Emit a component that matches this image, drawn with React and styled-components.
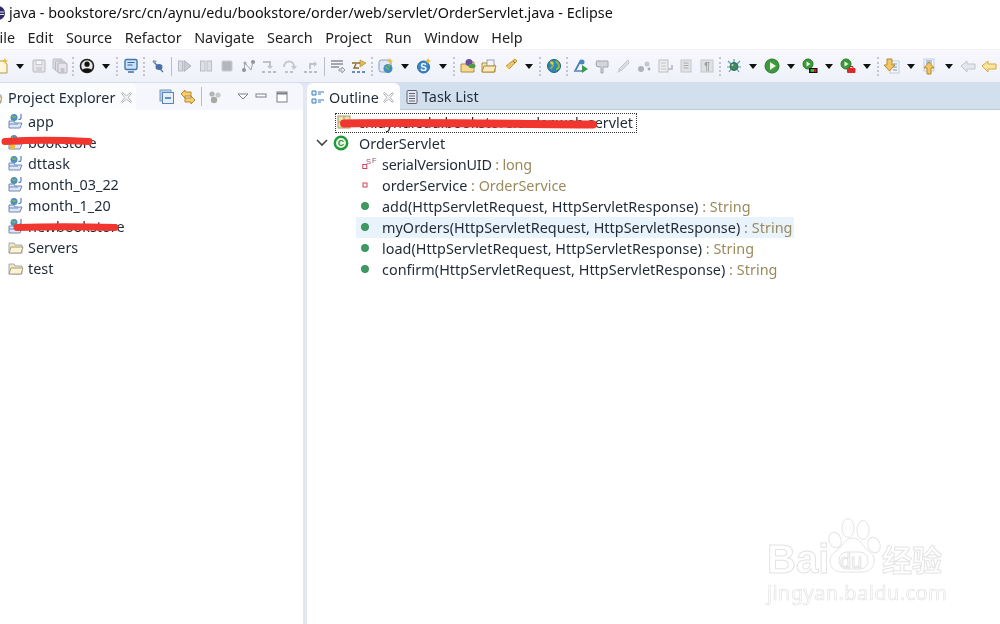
import React from 'react';
import styled, { createGlobalStyle } from 'styled-components';

const GlobalStyle = createGlobalStyle`
  html, body { margin: 0; padding: 0; background: #fff; }
  body { font-family: "Noto Sans", "Open Sans", sans-serif; color: #1f2a36; }
  #root { width: 1000px; height: 624px; overflow: hidden; }
`;

const Page = styled.div`
  position: relative;
  width: 1000px;
  height: 624px;
  overflow: hidden;
  display: flex;
  flex-direction: column;
  background: #fff;
  filter: blur(0.35px);
`;

const TitleBar = styled.div`
  height: 25px;
  flex: none;
  display: flex;
  align-items: center;
  gap: 3px;
  margin-left: -10px;
  font-size: 14.36px;
  color: #111;
  white-space: nowrap;
`;

const MenuBar = styled.div`
  height: 24px;
  box-sizing: border-box;
  padding-top: 1px;
  flex: none;
  display: flex;
  align-items: center;
  gap: 12.6px;
  margin-left: -8px;
  font-size: 14.4px;
  color: #222;
`;

const Toolbar = styled.div`
  height: 34px;
  flex: none;
  box-sizing: border-box;
  display: flex;
  align-items: center;
  margin-left: -10px;
  background: linear-gradient(#f8f8fd, #eef1fa);
  border-top: 1px solid #f1f1f6;
  border-bottom: 1px solid #d8dde8;
`;

const Slot = styled.span`
  flex: none;
  width: 21px;
  margin-left: ${p => p.$ml || 0}px;
  display: flex;
  justify-content: center;
`;

const Caret = styled.span`
  flex: none;
  width: 17px;
  display: flex;
  justify-content: center;
  &::after {
    content: "";
    border-left: 4.5px solid transparent;
    border-right: 4.5px solid transparent;
    border-top: 5px solid #111;
  }
`;

const Sep = styled.span`
  flex: none;
  width: 6px;
  height: 19px;
  display: flex;
  justify-content: center;
  &::after {
    content: "";
    width: 0;
    height: 100%;
    border-left: 2px dotted #c3c6ce;
  }
`;

const Bar = styled(Sep)`
  &::after { border-left: 1px solid #b9bdc8; }
`;

const Panes = styled.div`
  flex: 1;
  display: flex;
  background: #e3e7f3;
  min-height: 0;
`;

const LeftPane = styled.section`
  width: 303px;
  display: flex;
  flex-direction: column;
  background: #fff;
  border-top-right-radius: 6px;
  overflow: hidden;
`;

const RightPane = styled.section`
  flex: 1;
  margin-left: 4px;
  display: flex;
  flex-direction: column;
  background: #fff;
  border-top-left-radius: 6px;
  overflow: hidden;
`;

const LeftHeader = styled.div`
  height: 27px;
  display: flex;
  align-items: center;
  background: #f5f7fc;
  flex: none;
`;

const RightHeader = styled.div`
  height: 27px;
  display: flex;
  align-items: stretch;
  background: #d2e0ee;
  border-bottom: 1px solid #bdcbe0;
  box-sizing: border-box;
  flex: none;
`;

const ActiveTab = styled.div`
  width: ${p => p.$w}px;
  flex: none;
  box-sizing: border-box;
  display: flex;
  align-items: center;
  gap: ${p => p.$gap}px;
  padding: 1px 0 0 ${p => p.$pad}px;
  margin-left: ${p => p.$ml || 0}px;
  font-size: 14.4px;
  white-space: nowrap;
  color: #1f2a36;
  background: ${p => p.$bg};
  border-top-right-radius: 6px;
  height: 27px;
`;

const IdleTab = styled.div`
  display: flex;
  align-items: center;
  gap: 2px;
  padding: 1px 0 0 4px;
  font-size: 14.4px;
  color: #1f2a36;
`;

const PaneTools = styled.div`
  display: flex;
  align-items: center;
  margin-left: 20px;
`;

const List = styled.div`
  padding-top: 1px;
  display: flex;
  flex-direction: column;
`;

const Row = styled.div`
  height: 21px;
  flex: none;
  display: flex;
  align-items: center;
  font-size: 14.4px;
  white-space: nowrap;
  padding-left: ${p => p.$indent}px;
  letter-spacing: ${p => p.$ls || 0}px;
  color: #1f2a36;
`;

const RowIcon = styled.span`
  flex: none;
  width: 16px;
  height: 16px;
  display: flex;
  margin-right: ${p => p.$gap}px;
  margin-top: -1px;
`;

const Chevron = styled.span`
  flex: none;
  width: 22px;
  display: flex;
  justify-content: center;
`;

const HighlightRow = styled(Row)`
  background: #e8f3fb;
  width: 438px;
  margin-left: 49px;
  padding-left: 1px;
  box-sizing: border-box;
`;

const Type = styled.span`
  color: #9a8a5e;
  white-space: pre;
`;

const FocusRow = styled(Row)`
  box-sizing: border-box;
  width: 302px;
  height: 20px;
  margin: 2px 0 -0.5px 28px;
  padding: 0 0 2px;
  border: 1px dotted #333;
`;

/* the red marker strokes somebody drew over the screenshot */
const Scribble = styled.svg`
  position: absolute;
  left: ${p => p.$x}px;
  top: ${p => p.$y}px;
  overflow: visible;
  pointer-events: none;
`;

const Watermark = styled.div`
  position: absolute;
  left: 767px;
  top: 517px;
  width: 190px;
  height: 86px;
  color: #fff;
  -webkit-text-stroke: 1px #e4e4e4;
`;

const MarkBai = styled.span`
  position: absolute;
  left: 0;
  top: 20px;
  font: bold 40px "Liberation Sans", sans-serif;
`;

const MarkCn = styled.span`
  position: absolute;
  left: 115px;
  top: 26px;
  font: bold 30px/1 "Noto Sans CJK SC", sans-serif;
`;

const MarkUrl = styled.span`
  position: absolute;
  left: 0;
  top: 62px;
  font: 20px "Noto Sans", sans-serif;
  letter-spacing: .4px;
  -webkit-text-stroke: .7px #e4e4e4;
`;

const MarkPaw = styled.svg`
  position: absolute;
  left: 60px;
  top: 0;
`;

const MarkDu = styled.span`
  position: absolute;
  left: 73px;
  top: 33px;
  font: 20px "Liberation Sans", sans-serif;
`;

const drawings = {
  newfile: <><path d="M3 3h8l3 3v9H3z" fill="#fdf6d8" stroke="#b59a55" /><path d="M12 0l1 2 2 1-2 1-1 2-1-2-2-1 2-1z" fill="#eebb33" /></>,
  save: <><rect x="2" y="2" width="12" height="12" rx="1" fill="#e6e6ea" stroke="#b8b8c0" /><rect x="5" y="2.5" width="6" height="4" fill="#f6f6f8" stroke="#c6c6cc" /><rect x="5" y="9" width="6" height="5" fill="#d0d0d6" /></>,
  saveall: <><rect x="1" y="1" width="9" height="10" rx="1" fill="#dcdce2" stroke="#bcbcc4" /><rect x="3.5" y="3" width="9" height="10" rx="1" fill="#dedee4" stroke="#b8b8c0" /><rect x="6" y="5" width="9" height="10" rx="1" fill="#e6e6ea" stroke="#b0b0b8" /><rect x="8.5" y="10" width="4" height="5" fill="#c4c4cc" /></>,
  person: <><circle cx="8" cy="8" r="6.5" fill="#e8e8e8" stroke="#222" strokeWidth="1.6" /><circle cx="8" cy="6.2" r="2.6" fill="#111" /><path d="M3.2 12.5c1-3 8.6-3 9.6 0A6.5 6.5 0 0 1 3.2 12.5z" fill="#111" /></>,
  monitor: <><rect x="2" y="1.5" width="12" height="10" rx="1.5" fill="#cfe0f4" stroke="#3c78b4" strokeWidth="1.4" /><path d="M4.5 4.5h7M4.5 7h5" stroke="#2f6aa4" /><path d="M5 14h6" stroke="#6d90b8" strokeWidth="2" /></>,
  pinoff: <><path d="M3 3l10 11" stroke="#5b7aa8" strokeWidth="1.4" /><ellipse cx="9" cy="9" rx="3.5" ry="3" fill="#4a6ea8" /><path d="M3 2l4 1-3 3z" fill="#8aa0c0" /></>,
  resume: <><rect x="1.5" y="3" width="4" height="10" fill="#dcdde4" stroke="#b8bac4" /><path d="M7 2.5l7 5.5-7 5.5z" fill="#c8cad4" stroke="#b0b2be" /></>,
  pause: <><rect x="2.5" y="3" width="4.5" height="10" fill="#dfe0e6" stroke="#babcc6" /><rect x="9" y="3" width="4.5" height="10" fill="#dfe0e6" stroke="#babcc6" /></>,
  stop: <rect x="3" y="3" width="10" height="10" rx="1" fill="#b4b6be" stroke="#c8cad2" />,
  nodes: <><circle cx="4" cy="12" r="2" fill="#8e9098" /><circle cx="13" cy="4" r="2" fill="#8e9098" /><circle cx="5" cy="5" r="1.6" fill="#a6a8b0" /><path d="M4 12l1-7 6 7 2-8" fill="none" stroke="#a0a2aa" /></>,
  stepin: <><path d="M2 4h7v5" fill="none" stroke="#c0c2ca" strokeWidth="2" /><path d="M6 8h6l-3 3z" fill="#c0c2ca" /><path d="M1 14h3M7 14h3M12 14h3" stroke="#a8aab2" strokeWidth="1.4" /></>,
  stepover: <><path d="M2 9a5 5 0 0 1 10-1" fill="none" stroke="#c6c8d0" strokeWidth="2" /><path d="M9 8h6l-3 4z" fill="#c6c8d0" /><path d="M3 14h3M8 14h3" stroke="#b0b2ba" strokeWidth="1.4" /></>,
  stepret: <><path d="M7 11V6h5" fill="none" stroke="#c0c2ca" strokeWidth="2" /><path d="M11 3v6l3-3z" fill="#c0c2ca" /><path d="M1 14h3M6 14h3M11 14h3" stroke="#a8aab2" strokeWidth="1.4" /></>,
  lines: <><path d="M1 3h12M1 6h12M1 9h8" stroke="#8a8d96" strokeWidth="1.4" /><path d="M9 11h3V9l3 3-3 3v-2H9z" fill="#e8e9ee" stroke="#9a9da6" /></>,
  tasks: <><path d="M1 5h9l2 2" fill="none" stroke="#8a6c22" strokeWidth="1.6" /><path d="M9 2l6 3-6 4z" fill="#e5bc50" stroke="#a58530" strokeWidth=".6" /><path d="M5 6l-2 4h5" fill="none" stroke="#8a6c22" strokeWidth="1.4" /><path d="M1 14h3M6 14h3M11 14h3" stroke="#3f6aa8" strokeWidth="1.4" /></>,
  newpkg: <><rect x="1" y="2" width="12" height="12" rx="2.5" fill="#e4e8f4" stroke="#8a9cc0" /><circle cx="10" cy="10.5" r="4.5" fill="#3f8ec4" /><path d="M7 9c2 0 2 2 4 2M10 6.5l2 2" stroke="#8ab840" strokeWidth="1.6" fill="none" /><path d="M12 0l1 2 2 1-2 1-1 2-1-2-2-1 2-1z" fill="#eebb33" /></>,
  newclass: <><circle cx="7.5" cy="9" r="6" fill="#3a86c8" stroke="#2a6aa4" /><text x="7.5" y="12.5" fontSize="10" fontWeight="700" fontFamily="Liberation Sans" textAnchor="middle" fill="#fff">S</text><path d="M12 0l1 2 2 1-2 1-1 2-1-2-2-1 2-1z" fill="#eebb33" /></>,
  folderpkg: <><path d="M1 6h5l1-2h7v10H1z" fill="#f4d98e" stroke="#b18e3c" /><circle cx="9" cy="4.5" r="3.5" fill="#6a4fa0" /><ellipse cx="12" cy="8" rx="3.5" ry="2.2" fill="#4f9a4a" /></>,
  folderopen: <><path d="M1 5h5l1 2h7v7H1z" fill="#f6e0a4" stroke="#b18e3c" /><rect x="6" y="2" width="7" height="6" fill="#f4f4f8" stroke="#9aa0ac" /><path d="M3 8h12l-2 6H1z" fill="#fae9bc" stroke="#b18e3c" /></>,
  pen: <><path d="M13 1l2 2-8 8-3-3z" fill="#f0c46c" stroke="#c0983c" /><path d="M4 8l3 3-5 3.5z" fill="#fff6c0" /><path d="M11 3l2 2" stroke="#8a6a24" /></>,
  globe: <><circle cx="8" cy="8" r="6.5" fill="#2e86b8" stroke="#1f5f88" /><path d="M4 4c2 0 3 1 3 3s-2 2-2 4M10 3c1 2 3 2 3 5s-2 3-3 3" fill="none" stroke="#8ab840" strokeWidth="2" /><circle cx="6" cy="5" r="1.5" fill="#e8c850" /></>,
  debugger: <><path d="M8 2L2 13h7" fill="none" stroke="#3f74b4" strokeWidth="1.6" /><circle cx="9" cy="4" r="2.5" fill="#4a86c0" /><path d="M9 7l6 4-6 4z" fill="#3c9a50" /><path d="M2 13h6" stroke="#7aa0c8" strokeWidth="2" /></>,
  key: <><circle cx="5" cy="6" r="3" fill="#d8d9de" stroke="#9a9ca4" /><path d="M2 3h12v6H9v6H7V9" fill="#d4d5da" stroke="#a4a6ae" /></>,
  brush: <><path d="M13 2L4 11l2 2 8-8z" fill="#dcdde2" stroke="#c4c6cc" /><path d="M4 11l-2 4 4-2z" fill="#c8cad0" /></>,
  gears: <><circle cx="5" cy="11" r="3" fill="#b0b2b8" /><circle cx="11" cy="6" r="2.5" fill="#c4c6cc" /><circle cx="13" cy="11" r="1.4" fill="#a8aab0" /></>,
  doc: <><rect x="2" y="2" width="9" height="12" fill="#eceded" stroke="#bcbec4" /><path d="M4 5h5M4 8h5M4 11h5" stroke="#c0c2c8" /><path d="M15 7v4h-4" fill="none" stroke="#b4b6bc" strokeWidth="1.6" /></>,
  page: <><rect x="3" y="2" width="10" height="12" fill="#e2e3e6" stroke="#c4c6ca" /><path d="M5.5 5h5M5.5 7.5h5M5.5 10h5" stroke="#a8aab0" /></>,
  para: <><rect x="2" y="2" width="12" height="12" fill="#dfe0e3" stroke="#c6c8cc" /><text x="8" y="12" fontSize="10" fontWeight="700" fontFamily="Liberation Sans" textAnchor="middle" fill="#9a9ca2">¶</text></>,
  bug: <><circle cx="8" cy="8.5" r="4" fill="#3f8a6a" stroke="#2a6a50" /><path d="M8 1v3M2 3l3 3M14 3l-3 3M1 9h3M12 9h3M3 14l2-3M13 14l-2-3" stroke="#5f9aa8" strokeWidth="1.2" /><circle cx="6.5" cy="7" r="1" fill="#cfe8b0" /></>,
  run: <><circle cx="8" cy="8" r="7" fill="#3c9a3c" stroke="#2a7a2a" /><path d="M6 4l6 4-6 4z" fill="#f0f6e8" /></>,
  coverage: <><circle cx="6" cy="6" r="5" fill="#3c9a3c" stroke="#2a7a2a" /><path d="M4.5 3.5l4 2.5-4 2.5z" fill="#f0f6e8" /><rect x="7" y="10" width="8.5" height="5" fill="#111" /><rect x="8.5" y="11.2" width="3.6" height="2.6" fill="#2ecc40" /><rect x="12" y="11.2" width="2.4" height="2.6" fill="#e02020" /></>,
  tool: <><circle cx="6" cy="6" r="5" fill="#3c9a3c" stroke="#2a7a2a" /><path d="M4.5 3.5l4 2.5-4 2.5z" fill="#f0f6e8" /><rect x="7" y="10" width="8.5" height="5" rx="1" fill="#d82a2a" /><path d="M9.5 10V8.6h3.5V10" fill="none" stroke="#a81e1e" /></>,
  down: <><rect x="6" y="3" width="9" height="12" fill="#f4f6fa" stroke="#c4ccd8" /><path d="M9 6h4M9 9h4M9 12h4" stroke="#6a94c4" /><path d="M3 1h5v6h3l-5.5 6L0 7h3z" fill="#f2c662" stroke="#b68a2e" /></>,
  up: <><rect x="2" y="1" width="10" height="12" fill="#f4f6fa" stroke="#c4ccd8" /><path d="M4 3h6M4 5h6" stroke="#6a94c4" /><path d="M7 4l5 6H9v6H5v-6H2z" fill="#f2c662" stroke="#b68a2e" /></>,
  backoff: <path d="M1 8l6-5v3h8v5H7v3z" fill="#e6e7ec" stroke="#c2c4cc" />,
  back: <path d="M1 8l6-5v3h8v5H7v3z" fill="#fbe3a0" stroke="#d8a838" />,
  collapse: <><rect x="1" y="1" width="11" height="11" fill="#b8cfe8" stroke="#7a9cc4" /><rect x="3.5" y="3.5" width="11" height="11" fill="#e6eef8" stroke="#5d86b8" /><path d="M6 9h6" stroke="#3f6fa8" strokeWidth="1.6" /></>,
  link: <><path d="M5 1L1 5l4 4V7h6V3H5z" fill="#f6d070" stroke="#b8862a" /><path d="M11 7l4 4-4 4v-2H5V9h6z" fill="#f6d070" stroke="#b8862a" /></>,
  spheres: <><circle cx="5" cy="5" r="2.6" fill="#b4b4b4" /><circle cx="11" cy="6" r="2.6" fill="#c8c8c8" /><circle cx="7" cy="11" r="3.2" fill="#a8a8a8" /></>,
  menu: <path d="M3 5h10L8 10z" fill="#fff" stroke="#7c7f88" />,
  min: <rect x="3" y="5" width="10" height="3" fill="#fff" stroke="#7c7f88" />,
  max: <><rect x="3" y="3" width="10" height="10" fill="#fff" stroke="#7c7f88" /><path d="M3 4.5h10" stroke="#7c7f88" strokeWidth="2" /></>,
  close: <path d="M3 2l5 4 5-4 1 1-4 5 4 5-1 1-5-4-5 4-1-1 4-5-4-5z" fill="#fff" stroke="#8a8f98" strokeWidth=".9" />,
  outline: <><path d="M2 2h4v4H2zM2 10h4v4H2z" fill="#e4effa" stroke="#3a7cc0" /><path d="M8 3h6M8 5h3M8 11h6M8 13h3" stroke="#3a7cc0" /></>,
  tasklist: <><rect x="3" y="1.5" width="10" height="13" rx="1" fill="#e8e8f0" stroke="#5a6478" /><path d="M5 4.5h6M5 7h6M5 9.5h6M5 12h6" stroke="#5a6478" /></>,
  eclipse: <><circle cx="8" cy="8" r="7" fill="#2f2a6a" /><path d="M2 7h12M2 9.5h12" stroke="#fff" strokeWidth=".9" /></>,
  project: <><circle cx="6" cy="4.5" r="3.5" fill="#4a8fc0" /><path d="M4 3l2 1.5 2-1" stroke="#8fbb4a" strokeWidth="1.3" fill="none" /><path d="M13 1v4c0 1-1 2-2.5 1" fill="none" stroke="#5b7cb4" strokeWidth="1.2" /><path d="M1 8h5l1 2h7l-2 5H1z" fill="#dbe6f6" stroke="#7088b8" /><path d="M1 11h9" stroke="#7088b8" /></>,
  projectWarn: <><circle cx="6" cy="4.5" r="3.5" fill="#4a8fc0" /><path d="M4 3l2 1.5 2-1" stroke="#8fbb4a" strokeWidth="1.3" fill="none" /><path d="M1 8h5l1 2h7l-2 5H1z" fill="#dbe6f6" stroke="#7088b8" /><rect x="2" y="10" width="5" height="5" fill="#e8b840" /></>,
  folder: <><path d="M1 4h5l1 2h7v8H1z" fill="#f8e8b8" stroke="#9aa8c4" /><path d="M3 8h12l-2 6H1z" fill="#fcf3d6" stroke="#a8a078" /></>,
  packageDecl: <><rect x="2" y="2" width="12" height="12" fill="#e8e2b4" stroke="#a89c60" /><path d="M2 8h12M8 2v12" stroke="#a89c60" /></>,
  classIcon: <><circle cx="8" cy="8" r="6.2" fill="#e8f4e0" stroke="#1f9a3c" strokeWidth="2.4" /><text x="8" y="11" fontSize="8.5" fontWeight="700" fontFamily="Liberation Sans" textAnchor="middle" fill="#1f8a36">C</text></>,
  staticField: <><rect x="5.8" y="8.5" width="4" height="4" fill="#fff" stroke="#d0405e" /><text x="9" y="8" fontSize="7.5" fontFamily="Liberation Sans" fill="#c8405a">S</text><text x="15" y="7" fontSize="7.5" fontFamily="Liberation Sans" fill="#7a5a6a">F</text></>,
  field: <rect x="6" y="6" width="4" height="4" fill="#fff" stroke="#d0405e" />,
  method: <circle cx="8" cy="8" r="3.7" fill="#3f9a62" stroke="#2f7a4c" strokeWidth=".6" />,
};

const IconSvg = styled.svg`
  overflow: visible;
`;

const Icon = ({ name, size = 16 }) => (
  <IconSvg width={size} height={size} viewBox="0 0 16 16">{drawings[name]}</IconSvg>
);

const tools = [
  'newfile', '^', 'save', 'saveall', ':', 'person', '^', ':', 'monitor', ':', 'pinoff', '|',
  'resume', 'pause', 'stop', 'nodes', 'stepin', 'stepover', 'stepret', '|', 'lines', 'tasks', ':',
  'newpkg', '^', 'newclass', '^', ':', 'folderpkg', 'folderopen', 'pen', '^', ':', 'globe', ':',
  'debugger', 'key', 'brush', 'gears', 'doc', 'page', 'para', ':', 'bug', '^', 'run', '^',
  'coverage', '^', 'tool', '^', ':', 'down', '^', 'up', '^', 'backoff', 'back',
];

const menus = ['File', 'Edit', 'Source', 'Refactor', 'Navigate', 'Search', 'Project', 'Run', 'Window', 'Help'];

const projects = [
  ['project', 'app'], ['projectWarn', 'bookstore'], ['project', 'dttask'], ['project', 'month_03_22'],
  ['project', 'month_1_20'], ['project', 'newbookstore'], ['folder', 'Servers'], ['folder', 'test'],
];

const members = [
  ['staticField', 'serialVersionUID', 'long', -0.2],
  ['field', 'orderService', 'OrderService', 0],
  ['method', 'add(HttpServletRequest, HttpServletResponse)', 'String', 0.035],
  ['method', 'myOrders(HttpServletRequest, HttpServletResponse)', 'String', 0.035, true],
  ['method', 'load(HttpServletRequest, HttpServletResponse)', 'String', 0.035],
  ['method', 'confirm(HttpServletRequest, HttpServletResponse)', 'String', 0.035],
];

export default function App() {
  return (
    <Page>
      <GlobalStyle />
      <TitleBar>
        <Icon name="eclipse" />
        <span>java - bookstore/src/cn/aynu/edu/bookstore/order/web/servlet/OrderServlet.java - Eclipse</span>
      </TitleBar>
      <MenuBar>
        {menus.map(m => <span key={m}>{m}</span>)}
      </MenuBar>
      <Toolbar>
        {tools.map((t, i) => {
          if (t === '^') return <Caret key={i} />;
          if (t === ':') return <Sep key={i} />;
          if (t === '|') return <Bar key={i} />;
          return <Slot key={i}><Icon name={t} /></Slot>;
        })}
      </Toolbar>
      <Panes>
        <LeftPane>
          <LeftHeader>
            <ActiveTab $w={149} $pad={0} $gap={5} $bg="#fbfcfe" $ml={-13}>
              <Icon name="folder" />
              <span>Project Explorer</span>
              <Icon name="close" size={13} />
            </ActiveTab>
            <PaneTools>
              <Slot><Icon name="collapse" /></Slot>
              <Slot><Icon name="link" /></Slot>
              <Bar />
              <Slot><Icon name="spheres" /></Slot>
              <Slot $ml={7}><Icon name="menu" /></Slot>
              <Slot $ml={-3}><Icon name="min" /></Slot>
              <Slot><Icon name="max" /></Slot>
            </PaneTools>
          </LeftHeader>
          <List>
            {projects.map(([icon, label]) => (
              <Row key={label} $indent={8}>
                <RowIcon $gap={4}><Icon name={icon} /></RowIcon>
                {label}
              </Row>
            ))}
          </List>
        </LeftPane>
        <RightPane>
          <RightHeader>
            <ActiveTab $w={93} $pad={3} $gap={3} $bg="#fff">
              <Icon name="outline" />
              <span>Outline</span>
              <Icon name="close" size={13} />
            </ActiveTab>
            <IdleTab>
              <Icon name="tasklist" />
              <span>Task List</span>
            </IdleTab>
          </RightHeader>
          <List>
            <FocusRow>
              <RowIcon $gap={6}><Icon name="packageDecl" /></RowIcon>
              cn.aynu.edu.bookstore.order.web.servlet
            </FocusRow>
            <Row $indent={4}>
              <Chevron>
                <svg width="12" height="8" viewBox="0 0 12 8"><path d="M1 1l5 5 5-5" fill="none" stroke="#444" strokeWidth="1.6" /></svg>
              </Chevron>
              <RowIcon $gap={10}><Icon name="classIcon" /></RowIcon>
              OrderServlet
            </Row>
            {members.map(([icon, label, type, spacing, active]) => {
              const Line = active ? HighlightRow : Row;
              return (
                <Line key={label} $indent={50} $ls={spacing}>
                  <RowIcon $gap={9}><Icon name={icon} /></RowIcon>
                  {label}<Type> : {type}</Type>
                </Line>
              );
            })}
          </List>
        </RightPane>
      </Panes>

      <Scribble $x={0} $y={137} width="96" height="10"><path d="M5 4.5C30 3 60 3 89 4.5" stroke="#f0362f" strokeWidth="7" strokeLinecap="round" fill="none" /></Scribble>
      <Scribble $x={12} $y={222} width="110" height="10"><path d="M5 5.5C35 4.5 70 4.5 103 5.5" stroke="#f0362f" strokeWidth="7" strokeLinecap="round" fill="none" /></Scribble>
      <Scribble $x={338} $y={118} width="262" height="10"><path d="M6 5.5C90 4 170 6 255 6.5" stroke="#f0362f" strokeWidth="8" strokeLinecap="round" fill="none" /></Scribble>

      <Watermark>
        <MarkPaw width="60" height="58" viewBox="0 0 60 58" fill="#fff" stroke="#e4e4e4">
          <ellipse cx="8" cy="23" rx="6" ry="8" transform="rotate(-20 8 23)" />
          <ellipse cx="21" cy="11" rx="6" ry="9.5" />
          <ellipse cx="36" cy="13" rx="6" ry="9.5" />
          <ellipse cx="47" cy="28" rx="6" ry="8" transform="rotate(-20 47 28)" />
          <path d="M26 21c8 0 9 9 17 14 8 6 4 20-7 20H14C3 55 -1 41 8 35c8-5 9-14 18-14z" />
          <rect x="12" y="35" width="29" height="17" rx="8" />
        </MarkPaw>
        <MarkBai>Bai</MarkBai>
        <MarkDu>du</MarkDu>
        <MarkCn>经验</MarkCn>
        <MarkUrl>jingyan.baidu.com</MarkUrl>
      </Watermark>
    </Page>
  );
}
